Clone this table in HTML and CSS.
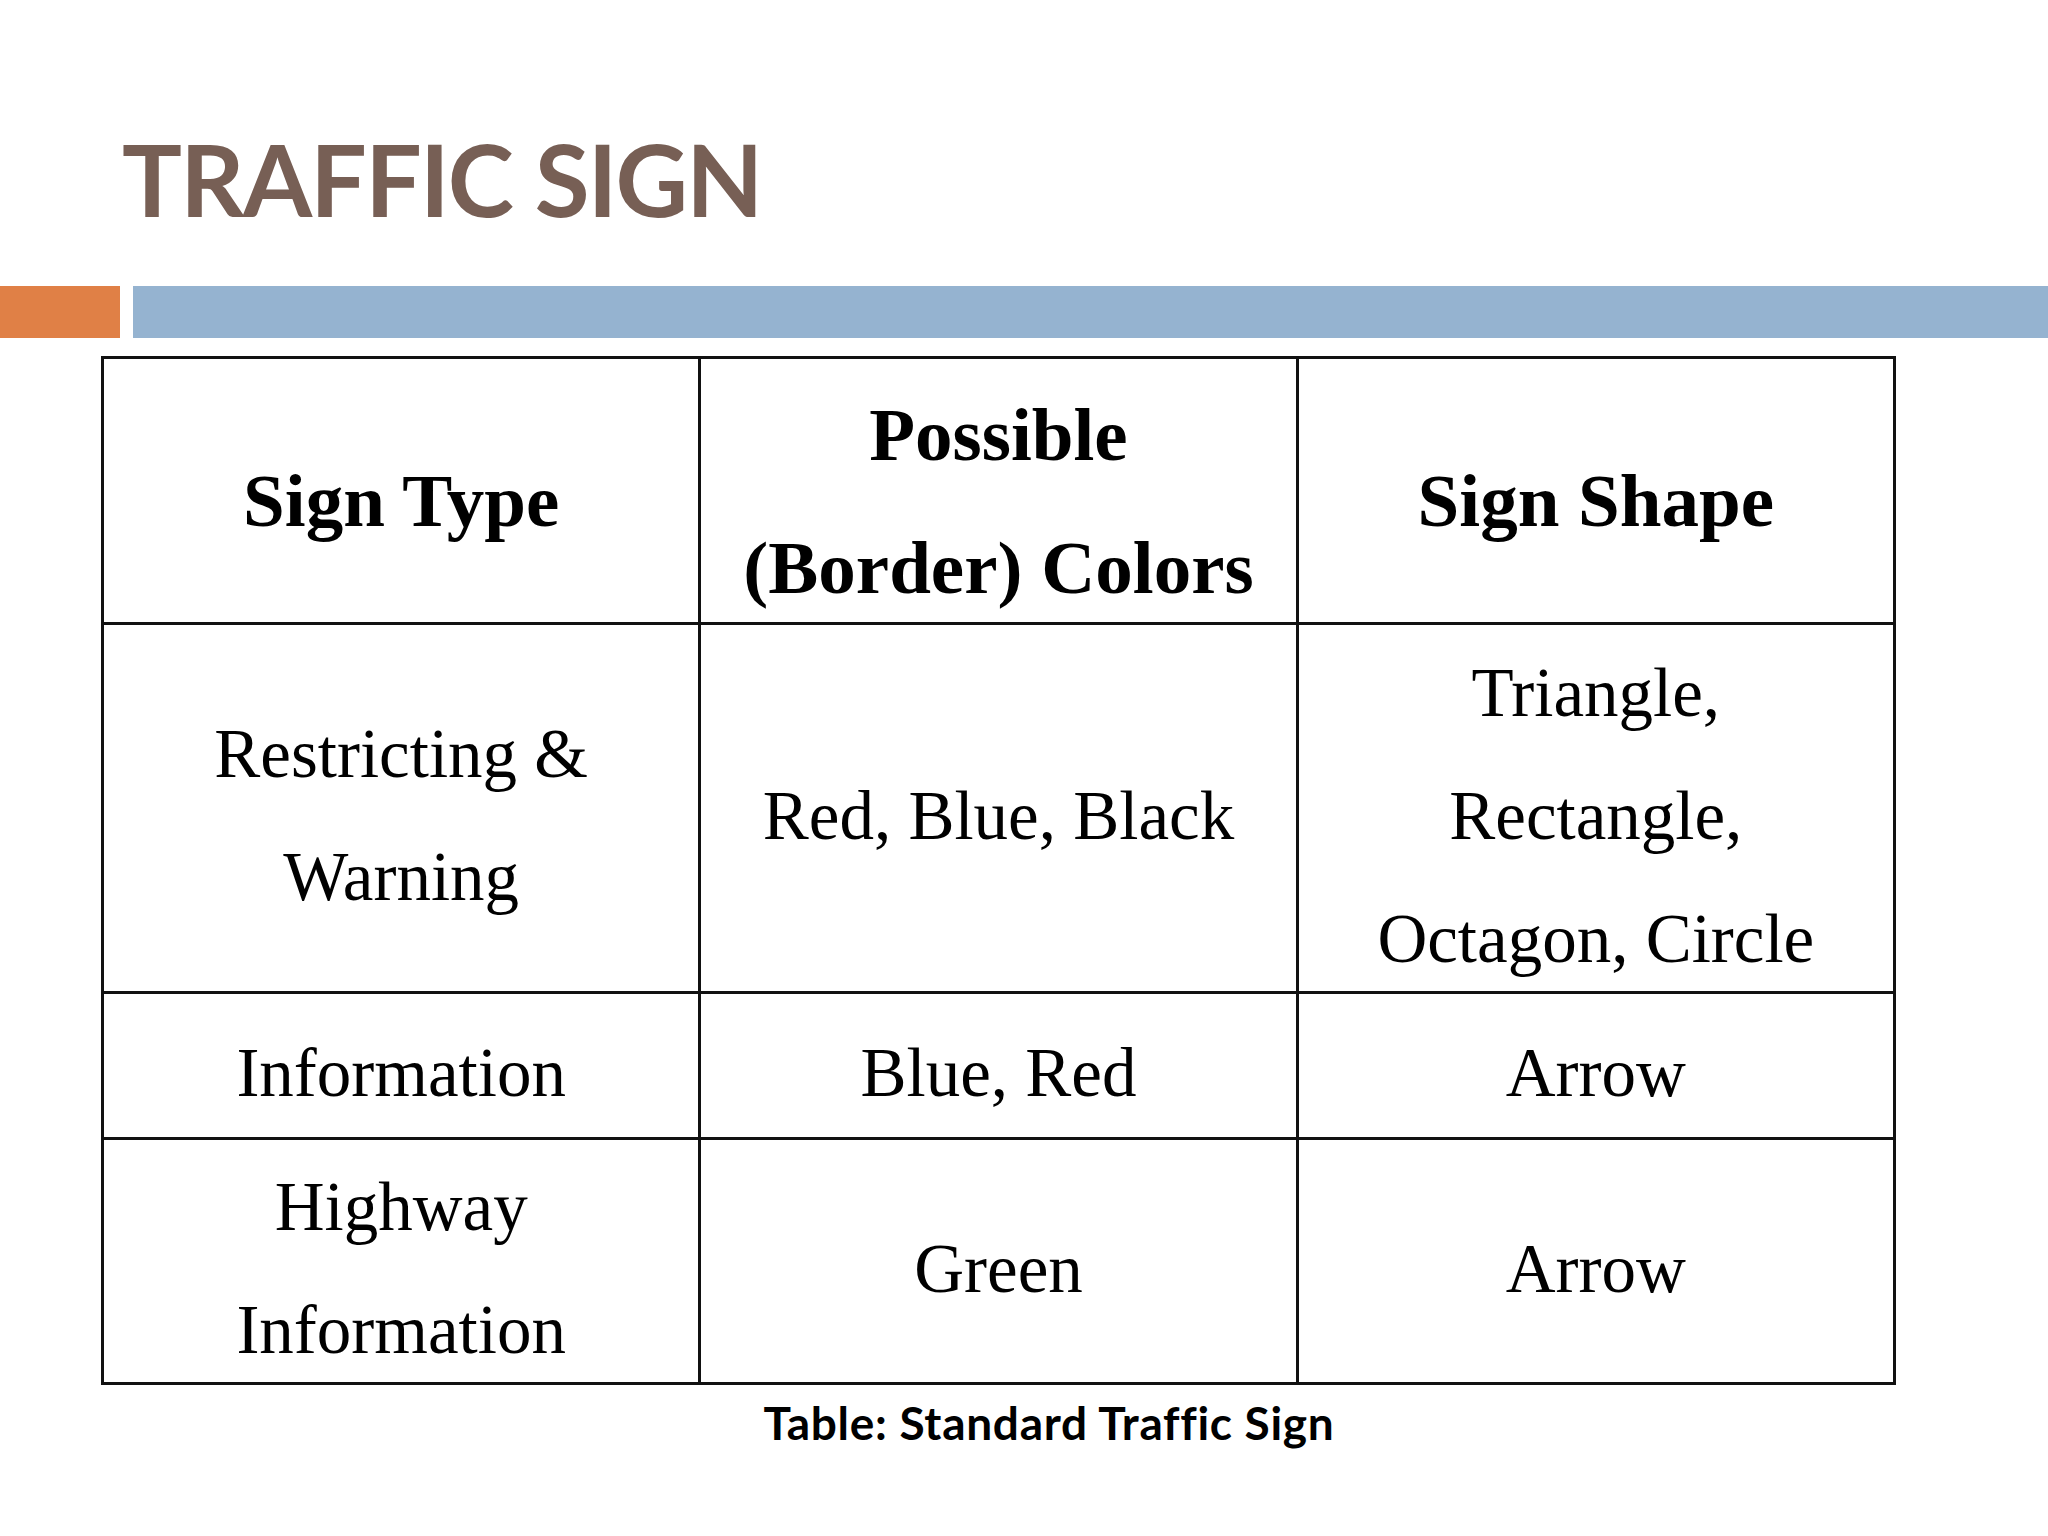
FILE: index.html
```html
<!DOCTYPE html>
<html lang="en">
<head>
<meta charset="utf-8">
<title>Traffic Sign</title>
<link rel="stylesheet" href="styles.css">
</head>
<body>
<div class="slide">
  <h1 class="title">TRAFFIC SIGN</h1>
  <div class="bars">
    <div class="bar-orange"></div>
    <div class="bar-blue"></div>
  </div>
  <div class="table">
    <div class="cell head"><span>Sign Type</span></div>
    <div class="cell head"><span>Possible<br>(Border) Colors</span></div>
    <div class="cell head"><span>Sign Shape</span></div>

    <div class="cell"><span>Restricting &amp;<br>Warning</span></div>
    <div class="cell"><span>Red, Blue, Black</span></div>
    <div class="cell"><span>Triangle,<br>Rectangle,<br>Octagon, Circle</span></div>

    <div class="cell"><span>Information</span></div>
    <div class="cell"><span>Blue, Red</span></div>
    <div class="cell"><span>Arrow</span></div>

    <div class="cell"><span>Highway<br>Information</span></div>
    <div class="cell"><span>Green</span></div>
    <div class="cell"><span>Arrow</span></div>
  </div>
  <p class="caption">Table: Standard Traffic Sign</p>
</div>
</body>
</html>
```

FILE: styles.css
```css
html, body {
  margin: 0;
  padding: 0;
  background: #ffffff;
}

.slide {
  width: 2048px;
  height: 1536px;
  overflow: hidden;
  display: flex;
  flex-direction: column;
}

.title {
  margin: 128px 0 0 122px;
  font-family: "Lato", "Open Sans", sans-serif;
  font-weight: 700;
  font-size: 100px;
  line-height: 100px;
  letter-spacing: -1.8px;
  color: #775f55;
}

.bars {
  margin-top: 58px;
  height: 52px;
  display: flex;
  gap: 13px;
}

.bar-orange {
  width: 120px;
  background: #e08046;
}

.bar-blue {
  flex: 1;
  background: #95b3d0;
}

.table {
  margin: 18px 0 0 101px;
  width: 1795px;
  box-sizing: border-box;
  border-top: 3px solid #111;
  border-left: 3px solid #111;
  display: grid;
  grid-template-columns: repeat(3, 1fr);
  grid-template-rows: 266px 369px 146px 245px;
  font-family: "Liberation Serif", "Times New Roman", serif;
  color: #000;
}

.cell {
  box-sizing: border-box;
  border-right: 3px solid #111;
  border-bottom: 3px solid #111;
  display: flex;
  flex-direction: column;
  justify-content: center;
  align-items: center;
  text-align: center;
  font-size: 69px;
  line-height: 123px;
  padding-top: 16px;
  overflow: visible;
}

.cell.head {
  font-weight: 700;
  font-size: 75px;
  line-height: 133px;
  padding-top: 20px;
}

.cell span {
  display: block;
  white-space: nowrap;
}

.caption {
  margin: 10px 0 0 50px;
  text-align: center;
  font-family: "Lato", "Open Sans", sans-serif;
  font-weight: 700;
  font-size: 46px;
  line-height: 56px;
  letter-spacing: 0.7px;
  color: #000;
}
```
